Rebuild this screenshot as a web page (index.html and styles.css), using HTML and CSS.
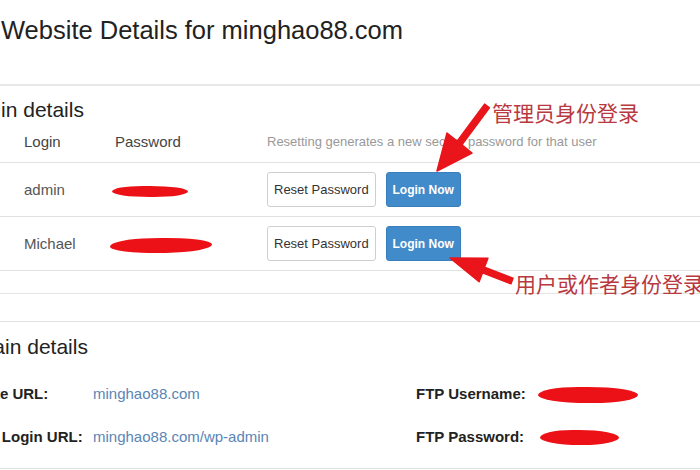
FILE: index.html
```html
<!DOCTYPE html>
<html lang="en">
<head>
  <meta charset="UTF-8" />
  <meta name="viewport" content="width=device-width, initial-scale=1.0"/>
  <title>Website Details</title>
  <link rel="stylesheet" href="styles.css">
</head>
<body>

  <div class="page">
    <h1 class="title">Website Details for minghao88.com</h1>

    <div class="content">
      <section class="block">
        <h3>Login details</h3>
        <table class="logins">
          <colgroup>
            <col class="col-login">
            <col class="col-pass">
            <col>
          </colgroup>
          <thead>
            <tr>
              <th class="first">Login</th>
              <th>Password</th>
              <th class="hint">Resetting generates a new secure password for that user</th>
            </tr>
          </thead>
          <tbody>
            <tr>
              <td class="first">admin</td>
              <td><span class="redact redact-1"></span></td>
              <td>
                <div class="actions">
                  <button class="btn">Reset Password</button>
                  <button class="btn btn-primary">Login Now</button>
                </div>
              </td>
            </tr>
            <tr>
              <td class="first">Michael</td>
              <td><span class="redact redact-2"></span></td>
              <td>
                <div class="actions">
                  <button class="btn">Reset Password</button>
                  <button class="btn btn-primary">Login Now</button>
                </div>
              </td>
            </tr>
          </tbody>
        </table>
        <div class="spacer"></div>
      </section>

      <section class="block domain">
        <h3>Domain details</h3>
        <div class="details">
          <span class="label">Website URL:</span>
          <a href="#">minghao88.com</a>
          <span class="label">FTP Username:</span>
          <span><span class="redact redact-3"></span></span>

          <span class="label">Admin Login URL:</span>
          <a href="#">minghao88.com/wp-admin</a>
          <span class="label">FTP Password:</span>
          <span><span class="redact redact-4"></span></span>
        </div>
      </section>
    </div>

    <!-- annotations -->
    <svg class="arrows" viewBox="0 0 700 470" width="700" height="470">
      <polygon points="484.6,104.1 489.4,107.9 461.9,144.9 472,153 437,171 447,133 457.1,141.1" />
      <polygon points="513,278.2 484.5,267.2 487.9,258.3 450,258 479.1,281.7 482.5,272.8 511,283.8" />
    </svg>
    <div class="note note-admin">管理员身份登录</div>
    <div class="note note-user">用户或作者身份登录</div>
  </div>

</body>
</html>
```

FILE: styles.css
```css
body {
  margin: 0;
  font-family: "Liberation Sans", Arial, sans-serif;
  background: white;
  color: #333;
}
.page {
  position: relative;
  width: 700px;
  height: 470px;
  overflow: hidden;
}
.title {
  margin: 15px 0 0;
  padding-left: 1px;
  font-size: 25.5px;
  font-weight: normal;
  line-height: 30px;
  color: #222;
}
.content {
  margin: 39px 0 0 -34px;
  width: 734px;
  border-top: 2px solid #e8e8e8;
}
h3 {
  margin: 12px 0 0;
  font-size: 21px;
  font-weight: normal;
  line-height: 24px;
  color: #222;
  white-space: nowrap;
}
.logins {
  width: 100%;
  table-layout: fixed;
  border-collapse: separate;
  border-spacing: 0;
}
.col-login {
  width: 149px;
}
.col-pass {
  width: 152px;
}
.logins th,
.logins td {
  padding: 0;
  text-align: left;
  vertical-align: middle;
  border-bottom: 1px solid #e2e2e2;
  font-size: 15px;
}
.logins th {
  font-weight: normal;
  line-height: 40px;
  color: #444;
}
.logins td {
  padding: 9px 0;
  line-height: 35px;
  color: #555;
}
.logins .first {
  padding-left: 58px;
}
.logins th.hint {
  font-size: 13px;
  color: #999;
  white-space: nowrap;
}
.actions {
  display: flex;
  gap: 10px;
}
.btn {
  height: 35px;
  padding: 0 6px;
  font-family: "Liberation Sans", Arial, sans-serif;
  font-size: 13px;
  color: #333;
  white-space: nowrap;
  background: white;
  border: 1px solid #cfcfcf;
  border-radius: 3px;
}
.btn-primary {
  width: 75px;
  padding: 0;
  font-size: 12px;
  font-weight: bold;
  color: white;
  background: #428bca;
  border-color: #3a7fbd;
}
.redact {
  display: inline-block;
  vertical-align: middle;
  background: #ec1116;
  border-radius: 40% 50% 45% 50% / 50%;
}
.redact-1 {
  width: 76px;
  height: 11px;
  margin-left: -3px;
}
.redact-2 {
  width: 102px;
  height: 15px;
  margin-left: -5px;
  transform: skewY(-1deg);
}
.redact-3 {
  width: 100px;
  height: 16px;
}
.redact-4 {
  width: 79px;
  height: 15px;
  margin-left: 2px;
}
.spacer {
  height: 22px;
  border-bottom: 1px solid #e5e5e5;
}
.domain {
  margin-top: 27px;
  padding-bottom: 10px;
  border-top: 1px solid #e2e2e2;
  border-bottom: 1px solid #e2e2e2;
}
.domain h3 {
  margin: 13px 0 0 -17px;
}
.details {
  display: grid;
  grid-template-columns: 142px 323px 122px 1fr;
  grid-auto-rows: 43px;
  align-items: center;
  margin: 13px 0 0 -15px;
  font-size: 15px;
}
.details .label {
  font-weight: bold;
  color: #222;
  white-space: nowrap;
}
.details a {
  color: #5a85b6;
  text-decoration: none;
}
.arrows {
  position: absolute;
  top: 0;
  left: 0;
  pointer-events: none;
}
.arrows polygon {
  fill: #e9151b;
  stroke: #e9151b;
  stroke-width: 1.5;
  stroke-linejoin: round;
}
.note {
  position: absolute;
  font-family: "Noto Sans CJK SC", sans-serif;
  font-size: 21px;
  line-height: 24px;
  color: #b8393f;
  white-space: nowrap;
}
.note-admin {
  left: 492px;
  top: 100px;
}
.note-user {
  left: 515px;
  top: 271px;
}
```
